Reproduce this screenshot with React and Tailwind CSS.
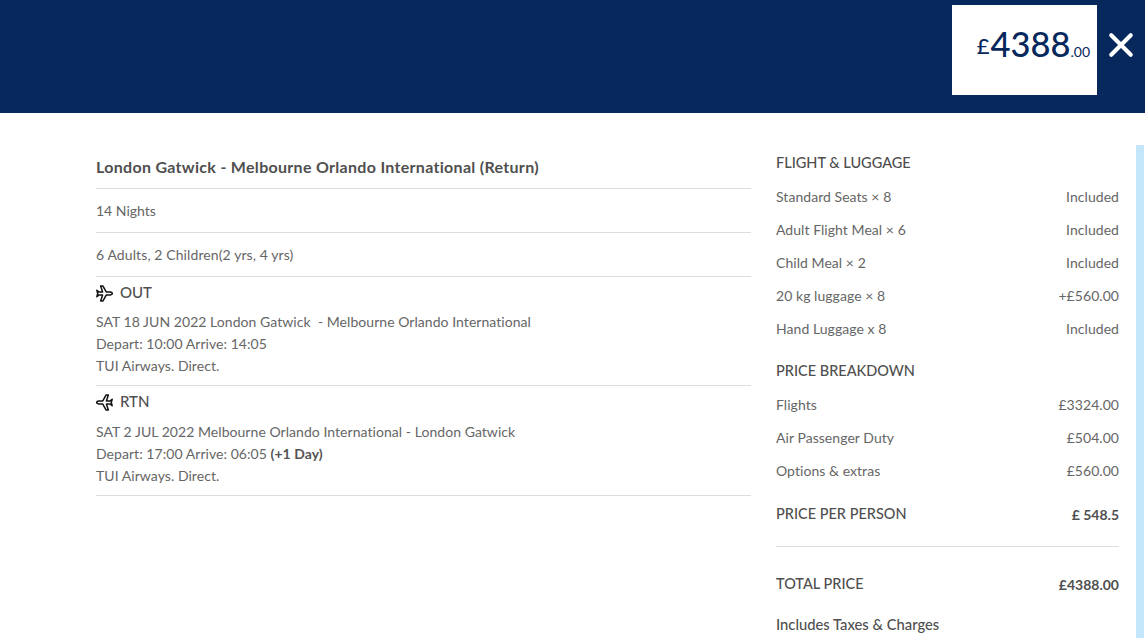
// App.jsx
const flightRows = [
  ['Standard Seats × 8', 'Included'],
  ['Adult Flight Meal × 6', 'Included'],
  ['Child Meal × 2', 'Included'],
  ['20 kg luggage × 8', '+£560.00'],
  ['Hand Luggage x 8', 'Included'],
]

const priceRows = [
  ['Flights', '£3324.00'],
  ['Air Passenger Duty', '£504.00'],
  ['Options & extras', '£560.00'],
]

function Plane({ flip }) {
  return (
    <svg
      viewBox="0 0 16 16"
      className={`w-[17px] h-[17px] shrink-0 ${flip ? '-scale-x-100' : ''}`}
      fill="none"
      stroke="#111"
      strokeWidth="1.4"
      strokeLinejoin="round"
    >
      <path d="M0.8 5 L2.6 6.5 L6.2 6.5 L4.4 1 L6.6 1 L9.6 6.5 L13.4 6.5 Q15.4 7 15.6 8 Q15.4 9 13.4 9.5 L9.6 9.5 L6.6 15 L4.4 15 L6.2 9.5 L2.6 9.5 L0.8 11 L1.6 8 Z" />
    </svg>
  )
}

function Row({ label, value }) {
  return (
    <div className="flex justify-between h-[33px] items-center text-[14px] tracking-[0.05px] text-[#666]">
      <span>{label}</span>
      <span>{value}</span>
    </div>
  )
}

export default function App() {
  return (
    <div className="w-[1145px] h-[638px] overflow-hidden bg-white font-['Lato',sans-serif] text-[#555]">
      {/* Header */}
      <div className="h-[113px] bg-[#06285c] flex justify-end items-start pt-[5px] pr-[48px] relative">
        <div className="w-[145px] h-[90px] bg-white flex items-start justify-end pr-[7px] pt-[16px] text-[#06285c]">
          <span className="text-[22px] leading-[50px] font-medium mr-[1px]">£</span>
          <span className="text-[34.5px] leading-[46px] font-medium">4388</span>
          <span className="text-[14px] leading-[14px] mt-[24px]">.00</span>
        </div>
        <svg viewBox="0 0 24 24" className="absolute top-[32px] right-[11px] w-[26px] h-[26px]" stroke="white" strokeWidth="3.8" strokeLinecap="round">
          <path d="M3 3 L21 21 M21 3 L3 21" />
        </svg>
      </div>

      <div className="flex pl-[96px]">
        {/* Left column */}
        <div className="w-[655px] pt-[32px]">
          <div className="h-[44px] pt-[12px] border-b border-[#ddd] font-bold text-[16px] leading-[20px] tracking-[0.3px] text-[#4f4f4f]">
            London Gatwick - Melbourne Orlando International (Return)
          </div>
          <div className="h-[44px] flex items-center border-b border-[#ddd] text-[14px] text-[#666]">14 Nights</div>
          <div className="h-[44px] flex items-center border-b border-[#ddd] text-[14px] tracking-[0.1px] text-[#666]">6 Adults, 2 Children(2 yrs, 4 yrs)</div>

          <div className="h-[109px] border-b border-[#ddd] pt-[6px]">
            <div className="flex items-center gap-[7px] h-[20px] text-[15px] font-medium text-[#4f4f4f]">
              <Plane />
              <span className="pb-[2px]">OUT</span>
            </div>
            <div className="mt-[8px] text-[14px] leading-[22px] tracking-[0.05px] text-[#666]">
              <p className="whitespace-pre">SAT 18 JUN 2022 London Gatwick  - Melbourne Orlando International</p>
              <p>Depart: 10:00 Arrive: 14:05</p>
              <p>TUI Airways. Direct.</p>
            </div>
          </div>

          <div className="h-[110px] border-b border-[#ddd] pt-[6px]">
            <div className="flex items-center gap-[7px] h-[20px] text-[15px] font-medium text-[#4f4f4f]">
              <Plane flip />
              <span className="pb-[2px]">RTN</span>
            </div>
            <div className="mt-[9px] text-[14px] leading-[22px] tracking-[0.05px] text-[#666]">
              <p>SAT 2 JUL 2022 Melbourne Orlando International - London Gatwick</p>
              <p>Depart: 17:00 Arrive: 06:05 <b className="font-bold text-[#555]">(+1 Day)</b></p>
              <p>TUI Airways. Direct.</p>
            </div>
          </div>
        </div>

        {/* Right column */}
        <div className="w-[343px] ml-[25px] pt-[40px]">
          <h3 className="h-[20px] leading-[20px] font-medium text-[14.5px] text-[#4f4f4f]">FLIGHT &amp; LUGGAGE</h3>
          <div className="mt-[7px]">
            {flightRows.map(([label, value]) => (
              <Row key={label} label={label} value={value} />
            ))}
          </div>
          <h3 className="mt-[16px] h-[20px] leading-[20px] font-medium text-[14.5px] text-[#4f4f4f]">PRICE BREAKDOWN</h3>
          <div className="mt-[7px]">
            {priceRows.map(([label, value]) => (
              <Row key={label} label={label} value={value} />
            ))}
          </div>
          <div className="mt-[17px] flex justify-between h-[20px] items-center font-medium text-[14.5px] text-[#4f4f4f]">
            <span>PRICE PER PERSON</span>
            <span className="font-bold text-[14px]">£ 548.5</span>
          </div>
          <div className="mt-[22px] border-t border-[#ddd]" />
          <div className="mt-[27px] flex justify-between h-[20px] items-center font-medium text-[14.5px] text-[#4f4f4f]">
            <span>TOTAL PRICE</span>
            <span className="font-bold text-[14px]">£4388.00</span>
          </div>
          <div className="mt-[20px] font-medium text-[14.75px] leading-[20px] text-[#4f4f4f]">Includes Taxes &amp; Charges</div>
        </div>

        {/* Scroll strip */}
        <div className="ml-[17px] mt-[32px] w-[8px] h-[493px] bg-[#c4e6fb] shrink-0" />
      </div>
    </div>
  )
}
